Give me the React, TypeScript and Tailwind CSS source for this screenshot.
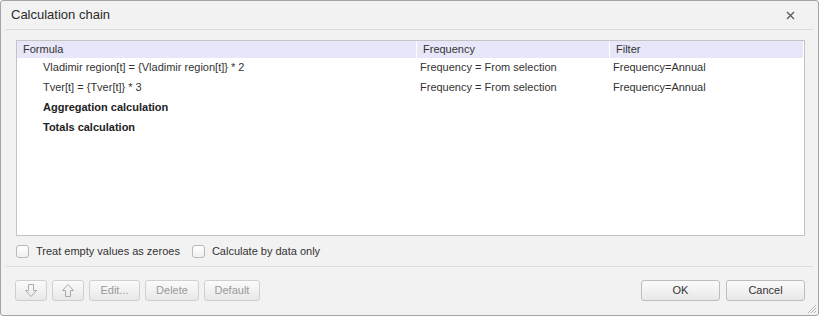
import React from "react";

function ArrowIcon({ up }: { up?: boolean }) {
  return (
    <svg width="12" height="13" viewBox="0 0 12 13" className={up ? "rotate-180" : ""}>
      <path
        d="M3.5 0.5 H8.5 V6.5 H11.5 L6 12.5 L0.5 6.5 H3.5 Z"
        fill="none"
        stroke="#ababab"
        strokeWidth="1"
        strokeLinejoin="miter"
      />
    </svg>
  );
}

function Btn({
  children,
  w,
  disabled,
}: {
  children: React.ReactNode;
  w: string;
  disabled?: boolean;
}) {
  return (
    <div
      className={`${w} h-[21px] flex items-center justify-center rounded-[3px] border ${
        disabled ? "border-[#cfcfcf] text-[#999]" : "border-[#bdbdbd] text-[#333]"
      } bg-gradient-to-b from-[#fbfbfb] to-[#e8e8e8] text-[11px]`}
    >
      {children}
    </div>
  );
}

function Checkbox() {
  return (
    <div className="w-[13px] h-[13px] rounded-[3px] border border-[#b9b9b9] bg-gradient-to-b from-[#ffffff] to-[#f0f0f0]" />
  );
}

export default function App() {
  const rows = [
    {
      f: "Vladimir region[t] = {Vladimir region[t]} * 2",
      q: "Frequency = From selection",
      l: "Frequency=Annual",
      bold: false,
    },
    {
      f: "Tver[t] = {Tver[t]} * 3",
      q: "Frequency = From selection",
      l: "Frequency=Annual",
      bold: false,
    },
    { f: "Aggregation calculation", q: "", l: "", bold: true },
    { f: "Totals calculation", q: "", l: "", bold: true },
  ];
  return (
    <div className="relative w-[819px] h-[316px] bg-[#f2f2f2] border border-[#a4a4a4] rounded-[3px] flex flex-col font-['Liberation_Sans',Arial,sans-serif] text-[#333] overflow-hidden">
      {/* Title bar */}
      <div className="h-[28px] flex items-center justify-between pl-[10px] pr-[23px]">
        <span className="text-[13px] text-[#2a2a2a]">Calculation chain</span>
        <svg width="9" height="9" viewBox="0 0 9 9">
          <path d="M1 1 L8 8 M8 1 L1 8" stroke="#5a5a5a" strokeWidth="1.3" />
        </svg>
      </div>
      <div className="mx-[5px] h-px bg-[#dadada]" />

      {/* Table */}
      <div className="mt-[10px] ml-[15px] w-[789px] h-[196px] border border-[#c4c4c4] bg-white flex flex-col text-[11px]">
        <div className="h-[17px] mr-px flex bg-[#e7e7f9] text-[#333]">
          <div className="w-[400px] border-r border-white pl-[6px] flex items-center">Formula</div>
          <div className="w-[193px] border-r border-white pl-[6px] flex items-center">Frequency</div>
          <div className="flex-1 pl-[6px] flex items-center">Filter</div>
        </div>
        {rows.map((r, i) => (
          <div key={i} className="h-[20px] pb-[2px] flex items-center">
            <div className={`w-[400px] pl-[26px] ${r.bold ? "font-bold text-[#222]" : ""}`}>{r.f}</div>
            <div className="w-[193px] pl-[3px]">{r.q}</div>
            <div className="flex-1 pl-[3px]">{r.l}</div>
          </div>
        ))}
      </div>

      {/* Checkboxes */}
      <div className="mt-[9px] h-[13px] pl-[15px] flex items-center text-[11px]">
        <Checkbox />
        <span className="ml-[7px]">Treat empty values as zeroes</span>
        <div className="ml-[12px]">
          <Checkbox />
        </div>
        <span className="ml-[7px]">Calculate by data only</span>
      </div>

      <div className="mt-[8px] mx-[5px] h-px bg-[#dcdcdc]" />

      {/* Buttons */}
      <div className="mt-[13px] pl-[14px] pr-[13px] flex items-center justify-between">
        <div className="flex gap-[5px]">
          <Btn w="w-[32px]" disabled>
            <ArrowIcon />
          </Btn>
          <Btn w="w-[32px]" disabled>
            <ArrowIcon up />
          </Btn>
          <Btn w="w-[51px]" disabled>
            Edit...
          </Btn>
          <Btn w="w-[54px]" disabled>
            Delete
          </Btn>
          <Btn w="w-[56px]" disabled>
            Default
          </Btn>
        </div>
        <div className="flex gap-[6px]">
          <Btn w="w-[79px]">OK</Btn>
          <Btn w="w-[79px]">Cancel</Btn>
        </div>
      </div>

      {/* Resize grip */}
      <svg width="11" height="11" viewBox="0 0 11 11" className="absolute right-[1px] bottom-[1px]">
        <path d="M10 2 L2 10 M10 5 L5 10 M10 8 L8 10" stroke="#b5b5b5" strokeWidth="1" />
      </svg>
    </div>
  );
}
